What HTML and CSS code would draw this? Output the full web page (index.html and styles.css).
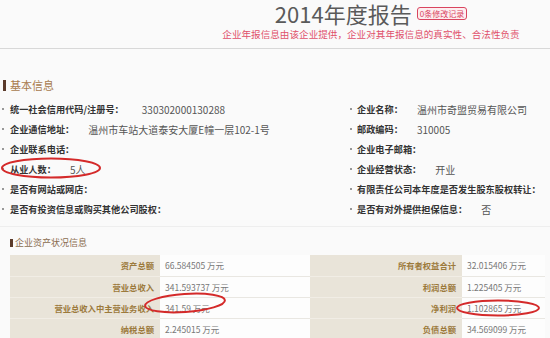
FILE: index.html
```html
<!DOCTYPE html>
<html lang="zh-CN">
<head>
    <meta charset="UTF-8" />
    <title>2014年度报告</title>
    <link rel="stylesheet" href="styles.css">
</head>
<body>
    <div class="page">
        <div class="report-head">
            <div class="title-row">
                <h1>2014年度报告</h1>
                <span class="badge">0条修改记录</span>
            </div>
            <p class="notice">企业年报信息由该企业提供，企业对其年报信息的真实性、合法性负责</p>
        </div>

        <div class="basic">
            <h3 class="sec-title">基本信息</h3>
            <ul class="info-grid">
                <li><span class="label">统一社会信用代码/注册号：</span><span class="value gap-wide">330302000130288</span></li>
                <li><span class="label">企业名称：</span><span class="value">温州市奇盟贸易有限公司</span></li>
                <li><span class="label">企业通信地址：</span><span class="value">温州市车站大道泰安大厦E幢一层102-1号</span></li>
                <li><span class="label">邮政编码：</span><span class="value">310005</span></li>
                <li><span class="label">企业联系电话：</span></li>
                <li><span class="label">企业电子邮箱：</span></li>
                <li><span class="label">从业人数：</span><span class="value">5人</span></li>
                <li><span class="label">企业经营状态：</span><span class="value">开业</span></li>
                <li><span class="label">是否有网站或网店：</span></li>
                <li><span class="label">有限责任公司本年度是否发生股东股权转让：</span></li>
                <li><span class="label">是否有投资信息或购买其他公司股权：</span></li>
                <li><span class="label">是否有对外提供担保信息：</span><span class="value">否</span></li>
            </ul>
        </div>

        <div class="assets">
            <h3 class="sec-title small">企业资产状况信息</h3>
            <table class="asset-table">
                <tr>
                    <td class="th">资产总额</td><td>66.584505 万元</td>
                    <td class="th">所有者权益合计</td><td>32.015406 万元</td>
                </tr>
                <tr>
                    <td class="th">营业总收入</td><td>341.593737 万元</td>
                    <td class="th">利润总额</td><td>1.225405 万元</td>
                </tr>
                <tr>
                    <td class="th">营业总收入中主营业务收入</td><td>341.59 万元</td>
                    <td class="th">净利润</td><td>1.102865 万元</td>
                </tr>
                <tr>
                    <td class="th">纳税总额</td><td>2.245015 万元</td>
                    <td class="th">负债总额</td><td>34.569099 万元</td>
                </tr>
            </table>
        </div>

        <!-- red hand-drawn marks over the screenshot -->
        <svg class="marks" width="550" height="338" viewBox="0 0 550 338">
            <ellipse cx="51" cy="168" rx="49" ry="9.5" />
            <ellipse cx="185" cy="303" rx="40" ry="9" transform="rotate(-4 185 303)" />
            <ellipse cx="498" cy="308" rx="41" ry="7.5" />
        </svg>
    </div>
</body>
</html>
```

FILE: styles.css
```css
* {
    box-sizing: border-box;
}

body {
    margin: 0;
    width: 550px;
    height: 338px;
    overflow: hidden;
    background-color: #fafafa;
    font-family: "Noto Sans CJK SC", "Noto Sans", sans-serif;
    color: #333;
}

.page {
    position: relative;
    height: 338px;
}

/* header */
.report-head {
    height: 49px;
    border-bottom: 1px solid #d8d8d8;
    padding-left: 192px;
    display: flex;
    flex-direction: column;
    align-items: center;
}

.title-row {
    display: flex;
    align-items: center;
    gap: 5px;
    height: 26px;
}

.title-row h1 {
    margin: 0;
    font-size: 22px;
    font-weight: normal;
    line-height: 26px;
    color: #5a5a5a;
}

.badge {
    font-size: 8px;
    line-height: 11px;
    padding: 0 2px;
    color: #d9455f;
    background-color: #fdeef0;
    border: 1px solid #d9455f;
    border-radius: 3px;
}

.notice {
    margin: 1px 0 0;
    font-size: 9.6px;
    line-height: 14px;
    color: #e0506a;
    white-space: nowrap;
}

/* section titles */
.sec-title {
    display: flex;
    align-items: center;
    gap: 4px;
    margin: 0;
    padding-left: 3px;
    font-size: 11px;
    font-weight: normal;
    line-height: 14px;
    color: #a87a4e;
}

.sec-title::before {
    content: "";
    width: 3px;
    height: 11px;
    background-color: #5b3b2b;
}

.sec-title.small {
    padding-left: 10px;
    gap: 2px;
    font-size: 9px;
    color: #8a6d50;
}

.sec-title.small::before {
    height: 8px;
}

/* basic info */
.basic {
    padding-top: 29px;
}

.info-grid {
    list-style: none;
    margin: 7px 0 0;
    padding: 0;
    display: grid;
    grid-template-columns: 348px 1fr;
    grid-auto-rows: 20px;
}

.info-grid li {
    display: flex;
    align-items: center;
    padding-left: 2px;
    white-space: nowrap;
}

.info-grid li::before {
    content: "";
    width: 2px;
    height: 2px;
    margin-right: 6px;
    border-radius: 50%;
    background-color: #777;
}

.info-grid li:nth-child(even)::before {
    margin-right: 5px;
}

.label {
    font-size: 9.2px;
    font-weight: bold;
    color: #333;
}

.value {
    margin-left: 14px;
    font-size: 10px;
    color: #555;
}

.value.gap-wide {
    margin-left: 18px;
}

/* assets */
.assets {
    margin-top: 7px;
    padding-top: 9px;
    border-top: 1px solid #eeeeee;
}

.asset-table {
    margin: 5px 0 0 10px;
    width: 535px;
    border-collapse: collapse;
    table-layout: fixed;
}

.asset-table td {
    height: 21px;
    padding: 0 0 0 5px;
    font-size: 8.5px;
    color: #777;
    background-color: #fdfdfd;
    border-bottom: 1px solid #e9e7e2;
    white-space: nowrap;
}

.asset-table td:nth-child(1),
.asset-table td:nth-child(2) {
    width: 150px;
}

.asset-table td:nth-child(3) {
    width: 152px;
}

.asset-table td.th {
    padding: 0 6px 0 0;
    text-align: right;
    font-size: 8.3px;
    font-weight: bold;
    color: #9c7a3c;
    background-color: #e9e4d9;
    border-bottom-color: #f1ede5;
}

/* red marks */
.marks {
    position: absolute;
    top: 0;
    left: 0;
    pointer-events: none;
}

.marks ellipse {
    fill: none;
    stroke: #d42a2a;
    stroke-width: 2;
}
```
